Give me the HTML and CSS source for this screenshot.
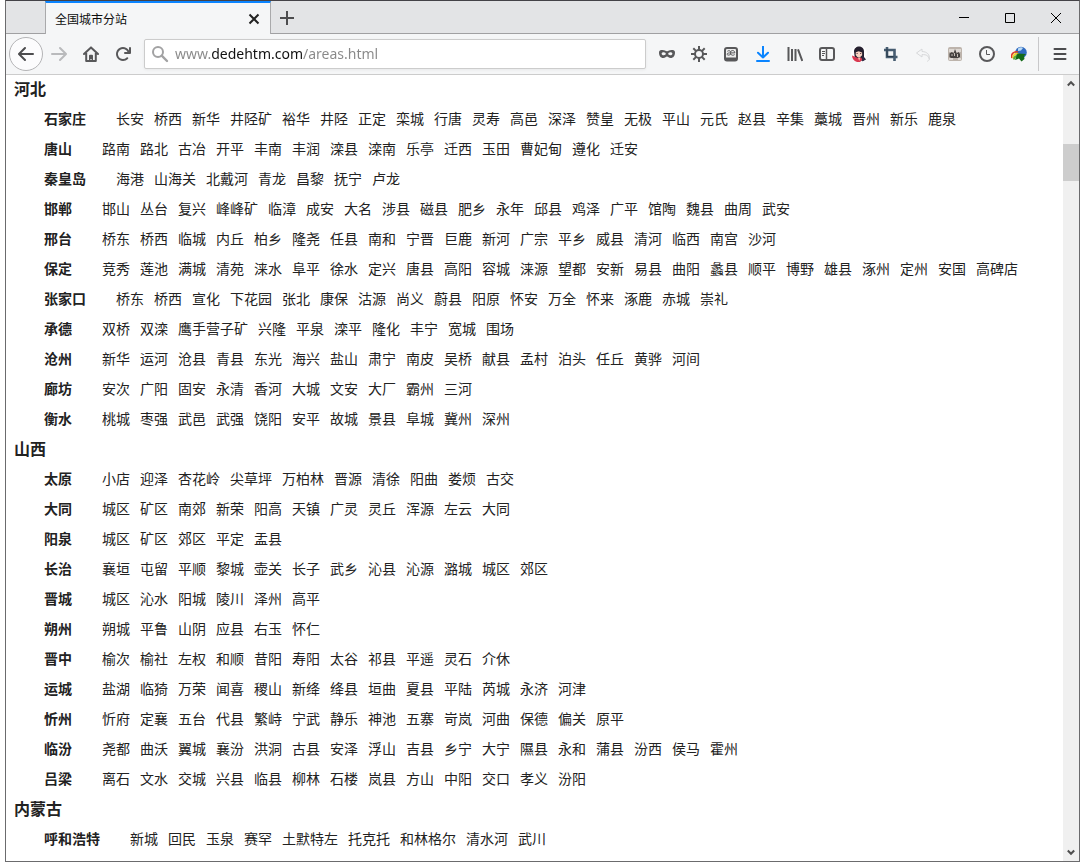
FILE: index.html
```html
<!DOCTYPE html>
<html lang="zh-CN">

<head>
  <meta charset="UTF-8">
  <meta name="viewport" content="width=device-width, initial-scale=1.0">
  <title>全国城市分站</title>
  <link rel="stylesheet" href="styles.css">
</head>

<body>
  <div class="window">
    <div class="tabbar">
      <div class="tab">
        <span class="tab-title">全国城市分站</span>
        <button class="tab-close" aria-label="关闭标签页">
          <svg width="12" height="12" viewBox="0 0 12 12"><path d="M1.5 1.5l9 9M10.5 1.5l-9 9" stroke="#222" stroke-width="2" /></svg>
        </button>
      </div>
      <button class="newtab" aria-label="新标签页">
        <svg width="14" height="14" viewBox="0 0 14 14"><path d="M7 0v14M0 7h14" stroke="#4c4c4e" stroke-width="2" /></svg>
      </button>
      <div class="controls">
        <button aria-label="最小化"><svg width="10" height="10" viewBox="0 0 10 10"><path d="M0 4.5h10" stroke="#000" /></svg></button>
        <button aria-label="最大化"><svg width="10" height="10" viewBox="0 0 10 10"><path d="M.5.5h9v9h-9z" fill="none" stroke="#000" /></svg></button>
        <button aria-label="关闭"><svg width="10" height="10" viewBox="0 0 10 10"><path d="M0 0l10 10M10 0L0 10" stroke="#000" /></svg></button>
      </div>
    </div>

    <div class="toolbar">
      <button class="back" aria-label="后退">
        <svg width="16" height="16" viewBox="0 0 16 16"><path d="M15 7H3.414l4.293-4.293a1 1 0 0 0-1.414-1.414l-6 6a1 1 0 0 0 0 1.414l6 6a1 1 0 0 0 1.414-1.414L3.414 9H15a1 1 0 0 0 0-2z" fill="#4c4c4e" /></svg>
      </button>
      <button class="tool" aria-label="前进">
        <svg width="16" height="16" viewBox="0 0 16 16"><path d="M1 7h11.586L8.293 2.707a1 1 0 0 1 1.414-1.414l6 6a1 1 0 0 1 0 1.414l-6 6a1 1 0 0 1-1.414-1.414L12.586 9H1a1 1 0 0 1 0-2z" fill="#b9babc" /></svg>
      </button>
      <button class="tool" aria-label="主页">
        <svg width="16" height="16" viewBox="0 0 16 16"><path d="M1 8l7-6.6L15 8M3.2 7v8h9.6V7" fill="none" stroke="#58585a" stroke-width="2" stroke-linecap="round" stroke-linejoin="round" /><path d="M6 15V9.8a1 1 0 0 1 1-1h2a1 1 0 0 1 1 1V15H8.600v-2H7.400v2z" fill="#58585a" /></svg>
      </button>
      <button class="tool" aria-label="刷新">
        <svg width="16" height="16" viewBox="0 0 16 16"><path d="M15 1a1 1 0 0 0-1 1v2.418A6.995 6.995 0 1 0 8 15a6.954 6.954 0 0 0 4.950-2.050 1 1 0 0 0-1.414-1.414A5.019 5.019 0 1 1 12.549 6H10a1 1 0 0 0 0 2h5a1 1 0 0 0 1-1V2a1 1 0 0 0-1-1z" fill="#58585a" /></svg>
      </button>

      <label class="urlbar">
        <svg width="18" height="18" viewBox="0 0 18 18"><circle cx="7" cy="7" r="5" fill="none" stroke="#a2a2a3" stroke-width="2" /><path d="M10.700 10.700L16 16" stroke="#a2a2a3" stroke-width="2.400" stroke-linecap="round" /></svg>
        <input class="url" type="text" value="www.dedehtm.com/areas.html" aria-label="网址" spellcheck="false">
      </label>

      <button class="tool" aria-label="隐私">
        <svg width="16" height="16" viewBox="0 0 16 16"><path fill-rule="evenodd" d="M3.500 4C1.300 4 0 4.600 0 6.500 0 9.800 1.700 12 4.300 12 6.300 12 6.900 10.400 8 10.400S9.700 12 11.700 12C14.300 12 16 9.800 16 6.500 16 4.600 14.700 4 12.500 4 10.300 4 9.500 5.200 8 5.200S5.700 4 3.500 4zM4.700 6.200c1.300 0 2.100.9 2.100 1.500S6 9.200 4.700 9.200 2.600 8.500 2.600 7.700s.8-1.500 2.100-1.500zM11.300 6.200c1.300 0 2.100.7 2.100 1.500s-.8 1.500-2.100 1.500-2.100-.9-2.100-1.500.8-1.500 2.100-1.500z" fill="#58585a" /></svg>
      </button>
      <button class="tool" aria-label="设置">
        <svg width="16" height="16" viewBox="0 0 16 16"><g fill="none" stroke="#58585a" stroke-width="2"><circle cx="8" cy="8" r="4" /><path d="M8 0v4M8 12v4M0 8h4M12 8h4M2.300 2.300l2.600 2.600M11.100 11.100l2.600 2.600M2.300 13.700l2.600-2.600M11.100 4.900l2.600-2.600" /></g></svg>
      </button>
      <button class="tool" aria-label="字典">
        <svg width="16" height="16" viewBox="0 0 16 16"><rect x="2" y="2" width="12" height="12.500" rx="2" fill="#eee" stroke="#58585a" stroke-width="2" /><path d="M2 11.500h12v3H2z" fill="#58585a" /><path d="M4.400 5.300c1-1 3.200-.9 3.200 1v2.200M7.600 6.900c-1.800 0-3.500.1-3.500 1.300s2.600 1.300 3.500-.2c.8 1.700 3 1.400 4 .6M7.600 6.900h4.200c.1-2.700-3.600-3.200-4.200-.9" fill="none" stroke="#58585a" /></svg>
      </button>
      <button class="tool" aria-label="下载">
        <svg width="16" height="16" viewBox="0 0 16 16"><path d="M8 .5v11M3 6.700l5 4.800 5-4.800M2 15h12" fill="none" stroke="#0a84ff" stroke-width="2" stroke-linecap="round" stroke-linejoin="round" /></svg>
      </button>
      <button class="tool" aria-label="我的足迹">
        <svg width="16" height="16" viewBox="0 0 16 16"><path d="M1.500 1v14M5 3v12M8.500 3v12M11 3.300L15.300 15" fill="none" stroke="#58585a" stroke-width="2" /></svg>
      </button>
      <button class="tool" aria-label="侧栏">
        <svg width="16" height="16" viewBox="0 0 16 16"><rect x="1" y="2" width="14" height="12" rx="2" fill="none" stroke="#58585a" stroke-width="2" /><path d="M7.500 2v12" stroke="#58585a" stroke-width="1.500" /><path d="M3 5.500h3M3 7.500h3M3 9.500h2" stroke="#58585a" /></svg>
      </button>
      <button class="tool" aria-label="用户">
        <svg width="16" height="16" viewBox="0 0 16 16"><circle cx="8" cy="8" r="8" fill="#fff" /><path d="M3 5.500C3 2.500 5.400.5 8 .5s5 1.800 5 5v5.500l2 2.500-3 1.500-8-2z" fill="#25202f" /><path d="M4.800 6.200l2.800-1 3.500 1.300v2.700L9 11.300H6.500L4.700 9z" fill="#f8d2c1" /><path d="M5.600 7.500h1M9.200 7.500h1" stroke="#472d38" /><path d="M1 9.500l2.500 1L6.700 12l3.300-.5 1.500 2L9 16H6C2.700 15 1.200 12.500 1 9.500z" fill="#d93850" /><path d="M7 11.500h2.300L8.200 15z" fill="#f7c7b8" /><path d="M11.300 9v6.500l2.700-2z" fill="#332c48" /></svg>
      </button>
      <button class="tool" aria-label="截图">
        <svg width="16" height="16" viewBox="0 0 16 16"><path d="M4 1v10h7M1 4h10.500v11M8 11h6.500" fill="none" stroke="#465c70" stroke-width="2.600" /><path d="M4 3v7.500h6.500" fill="none" stroke="#293b4b" /></svg>
      </button>
      <button class="tool" aria-label="撤销">
        <svg width="16" height="16" viewBox="0 0 16 16"><path d="M7 3L1.500 7 7 11V8.600c4.500-.1 6.500.9 7.300 4.800M7 3v2.500c5 .2 8 3 7.300 7.900-.5 1.200-1.300 1.700-2.300 1.900" fill="none" stroke="#d7d8da" stroke-linejoin="round" /></svg>
      </button>
      <button class="tool" aria-label="扩展">
        <svg width="16" height="16" viewBox="0 0 16 16"><rect x="1" y="1" width="14" height="14" rx="2" fill="#bdb4ac" /><path d="M2 3h12v3H2zM2 12h4v2H2zM11 12h3v2h-3z" fill="#ded8d2" /><path d="M2.500 11V7.500L5 6l1.500 1.500L8 3l1.700 4.500L11.500 6 13 8v3l-2 1H4z" fill="#46413e" /><path d="M5 8v2M7.500 7v3M10.500 8v3" stroke="#c5bdb5" /></svg>
      </button>
      <button class="tool" aria-label="历史">
        <svg width="16" height="16" viewBox="0 0 16 16"><circle cx="8" cy="8" r="7" fill="none" stroke="#58585a" stroke-width="2" /><path d="M7.500 4v4.500H11" fill="none" stroke="#58585a" /></svg>
      </button>
      <button class="tool" aria-label="下载管理">
        <svg width="16" height="16" viewBox="0 0 16 16"><circle cx="10" cy="6.500" r="5.800" fill="#316cc0" /><path d="M7 2.500c2-1.500 4-1.500 5-.5L10 4.500 7 5z" fill="#bddcf4" /><path d="M1 12C-.5 8 3 5 7 6" fill="none" stroke="#dd3b25" stroke-width="1.600" /><path d="M2.500 12.500C1.500 9 4.500 7 7.500 8" fill="none" stroke="#f3d22b" stroke-width="1.800" /><path d="M3 13.500c0-2.500 2-4 4.500-3.500" fill="none" stroke="#57ab35" stroke-width="2" /><path d="M6.500 7.500l8.500.5-2 2 .5 3-3 2.500-2.500-3-4 1.500z" fill="#146b18" /></svg>
      </button>
      <div class="sep"></div>
      <button class="tool" aria-label="菜单">
        <svg width="16" height="16" viewBox="0 0 16 16"><path d="M2.500 3h11M2.500 8h11M2.500 13h11" stroke="#4c4c4e" stroke-width="2" stroke-linecap="round" /></svg>
      </button>
    </div>

    <div class="viewport">
      <div class="areas">
        <h2>河北</h2>
        <div class="city"><strong>石家庄</strong> <a href="#">长安</a> <a href="#">桥西</a> <a href="#">新华</a> <a href="#">井陉矿</a> <a href="#">裕华</a> <a href="#">井陉</a> <a href="#">正定</a> <a href="#">栾城</a> <a href="#">行唐</a> <a href="#">灵寿</a> <a href="#">高邑</a> <a href="#">深泽</a> <a href="#">赞皇</a> <a href="#">无极</a> <a href="#">平山</a> <a href="#">元氏</a> <a href="#">赵县</a> <a href="#">辛集</a> <a href="#">藁城</a> <a href="#">晋州</a> <a href="#">新乐</a> <a href="#">鹿泉</a></div>
        <div class="city"><strong>唐山</strong> <a href="#">路南</a> <a href="#">路北</a> <a href="#">古冶</a> <a href="#">开平</a> <a href="#">丰南</a> <a href="#">丰润</a> <a href="#">滦县</a> <a href="#">滦南</a> <a href="#">乐亭</a> <a href="#">迁西</a> <a href="#">玉田</a> <a href="#">曹妃甸</a> <a href="#">遵化</a> <a href="#">迁安</a></div>
        <div class="city"><strong>秦皇岛</strong> <a href="#">海港</a> <a href="#">山海关</a> <a href="#">北戴河</a> <a href="#">青龙</a> <a href="#">昌黎</a> <a href="#">抚宁</a> <a href="#">卢龙</a></div>
        <div class="city"><strong>邯郸</strong> <a href="#">邯山</a> <a href="#">丛台</a> <a href="#">复兴</a> <a href="#">峰峰矿</a> <a href="#">临漳</a> <a href="#">成安</a> <a href="#">大名</a> <a href="#">涉县</a> <a href="#">磁县</a> <a href="#">肥乡</a> <a href="#">永年</a> <a href="#">邱县</a> <a href="#">鸡泽</a> <a href="#">广平</a> <a href="#">馆陶</a> <a href="#">魏县</a> <a href="#">曲周</a> <a href="#">武安</a></div>
        <div class="city"><strong>邢台</strong> <a href="#">桥东</a> <a href="#">桥西</a> <a href="#">临城</a> <a href="#">内丘</a> <a href="#">柏乡</a> <a href="#">隆尧</a> <a href="#">任县</a> <a href="#">南和</a> <a href="#">宁晋</a> <a href="#">巨鹿</a> <a href="#">新河</a> <a href="#">广宗</a> <a href="#">平乡</a> <a href="#">威县</a> <a href="#">清河</a> <a href="#">临西</a> <a href="#">南宫</a> <a href="#">沙河</a></div>
        <div class="city"><strong>保定</strong> <a href="#">竞秀</a> <a href="#">莲池</a> <a href="#">满城</a> <a href="#">清苑</a> <a href="#">涞水</a> <a href="#">阜平</a> <a href="#">徐水</a> <a href="#">定兴</a> <a href="#">唐县</a> <a href="#">高阳</a> <a href="#">容城</a> <a href="#">涞源</a> <a href="#">望都</a> <a href="#">安新</a> <a href="#">易县</a> <a href="#">曲阳</a> <a href="#">蠡县</a> <a href="#">顺平</a> <a href="#">博野</a> <a href="#">雄县</a> <a href="#">涿州</a> <a href="#">定州</a> <a href="#">安国</a> <a href="#">高碑店</a></div>
        <div class="city"><strong>张家口</strong> <a href="#">桥东</a> <a href="#">桥西</a> <a href="#">宣化</a> <a href="#">下花园</a> <a href="#">张北</a> <a href="#">康保</a> <a href="#">沽源</a> <a href="#">尚义</a> <a href="#">蔚县</a> <a href="#">阳原</a> <a href="#">怀安</a> <a href="#">万全</a> <a href="#">怀来</a> <a href="#">涿鹿</a> <a href="#">赤城</a> <a href="#">崇礼</a></div>
        <div class="city"><strong>承德</strong> <a href="#">双桥</a> <a href="#">双滦</a> <a href="#">鹰手营子矿</a> <a href="#">兴隆</a> <a href="#">平泉</a> <a href="#">滦平</a> <a href="#">隆化</a> <a href="#">丰宁</a> <a href="#">宽城</a> <a href="#">围场</a></div>
        <div class="city"><strong>沧州</strong> <a href="#">新华</a> <a href="#">运河</a> <a href="#">沧县</a> <a href="#">青县</a> <a href="#">东光</a> <a href="#">海兴</a> <a href="#">盐山</a> <a href="#">肃宁</a> <a href="#">南皮</a> <a href="#">吴桥</a> <a href="#">献县</a> <a href="#">孟村</a> <a href="#">泊头</a> <a href="#">任丘</a> <a href="#">黄骅</a> <a href="#">河间</a></div>
        <div class="city"><strong>廊坊</strong> <a href="#">安次</a> <a href="#">广阳</a> <a href="#">固安</a> <a href="#">永清</a> <a href="#">香河</a> <a href="#">大城</a> <a href="#">文安</a> <a href="#">大厂</a> <a href="#">霸州</a> <a href="#">三河</a></div>
        <div class="city"><strong>衡水</strong> <a href="#">桃城</a> <a href="#">枣强</a> <a href="#">武邑</a> <a href="#">武强</a> <a href="#">饶阳</a> <a href="#">安平</a> <a href="#">故城</a> <a href="#">景县</a> <a href="#">阜城</a> <a href="#">冀州</a> <a href="#">深州</a></div>

        <h2>山西</h2>
        <div class="city"><strong>太原</strong> <a href="#">小店</a> <a href="#">迎泽</a> <a href="#">杏花岭</a> <a href="#">尖草坪</a> <a href="#">万柏林</a> <a href="#">晋源</a> <a href="#">清徐</a> <a href="#">阳曲</a> <a href="#">娄烦</a> <a href="#">古交</a></div>
        <div class="city"><strong>大同</strong> <a href="#">城区</a> <a href="#">矿区</a> <a href="#">南郊</a> <a href="#">新荣</a> <a href="#">阳高</a> <a href="#">天镇</a> <a href="#">广灵</a> <a href="#">灵丘</a> <a href="#">浑源</a> <a href="#">左云</a> <a href="#">大同</a></div>
        <div class="city"><strong>阳泉</strong> <a href="#">城区</a> <a href="#">矿区</a> <a href="#">郊区</a> <a href="#">平定</a> <a href="#">盂县</a></div>
        <div class="city"><strong>长治</strong> <a href="#">襄垣</a> <a href="#">屯留</a> <a href="#">平顺</a> <a href="#">黎城</a> <a href="#">壶关</a> <a href="#">长子</a> <a href="#">武乡</a> <a href="#">沁县</a> <a href="#">沁源</a> <a href="#">潞城</a> <a href="#">城区</a> <a href="#">郊区</a></div>
        <div class="city"><strong>晋城</strong> <a href="#">城区</a> <a href="#">沁水</a> <a href="#">阳城</a> <a href="#">陵川</a> <a href="#">泽州</a> <a href="#">高平</a></div>
        <div class="city"><strong>朔州</strong> <a href="#">朔城</a> <a href="#">平鲁</a> <a href="#">山阴</a> <a href="#">应县</a> <a href="#">右玉</a> <a href="#">怀仁</a></div>
        <div class="city"><strong>晋中</strong> <a href="#">榆次</a> <a href="#">榆社</a> <a href="#">左权</a> <a href="#">和顺</a> <a href="#">昔阳</a> <a href="#">寿阳</a> <a href="#">太谷</a> <a href="#">祁县</a> <a href="#">平遥</a> <a href="#">灵石</a> <a href="#">介休</a></div>
        <div class="city"><strong>运城</strong> <a href="#">盐湖</a> <a href="#">临猗</a> <a href="#">万荣</a> <a href="#">闻喜</a> <a href="#">稷山</a> <a href="#">新绛</a> <a href="#">绛县</a> <a href="#">垣曲</a> <a href="#">夏县</a> <a href="#">平陆</a> <a href="#">芮城</a> <a href="#">永济</a> <a href="#">河津</a></div>
        <div class="city"><strong>忻州</strong> <a href="#">忻府</a> <a href="#">定襄</a> <a href="#">五台</a> <a href="#">代县</a> <a href="#">繁峙</a> <a href="#">宁武</a> <a href="#">静乐</a> <a href="#">神池</a> <a href="#">五寨</a> <a href="#">岢岚</a> <a href="#">河曲</a> <a href="#">保德</a> <a href="#">偏关</a> <a href="#">原平</a></div>
        <div class="city"><strong>临汾</strong> <a href="#">尧都</a> <a href="#">曲沃</a> <a href="#">翼城</a> <a href="#">襄汾</a> <a href="#">洪洞</a> <a href="#">古县</a> <a href="#">安泽</a> <a href="#">浮山</a> <a href="#">吉县</a> <a href="#">乡宁</a> <a href="#">大宁</a> <a href="#">隰县</a> <a href="#">永和</a> <a href="#">蒲县</a> <a href="#">汾西</a> <a href="#">侯马</a> <a href="#">霍州</a></div>
        <div class="city"><strong>吕梁</strong> <a href="#">离石</a> <a href="#">文水</a> <a href="#">交城</a> <a href="#">兴县</a> <a href="#">临县</a> <a href="#">柳林</a> <a href="#">石楼</a> <a href="#">岚县</a> <a href="#">方山</a> <a href="#">中阳</a> <a href="#">交口</a> <a href="#">孝义</a> <a href="#">汾阳</a></div>

        <h2>内蒙古</h2>
        <div class="city"><strong>呼和浩特</strong> <a href="#">新城</a> <a href="#">回民</a> <a href="#">玉泉</a> <a href="#">赛罕</a> <a href="#">土默特左</a> <a href="#">托克托</a> <a href="#">和林格尔</a> <a href="#">清水河</a> <a href="#">武川</a></div>
      </div>

      <div class="scrollbar">
        <button aria-label="向上滚动"><svg width="8" height="7" viewBox="0 0 8 7"><path d="M.8 5.500L4 2.200l3.200 3.300" fill="none" stroke="#505050" stroke-width="2" /></svg></button>
        <div class="track"><div class="thumb"></div></div>
        <button aria-label="向下滚动"><svg width="8" height="7" viewBox="0 0 8 7"><path d="M.8 1.500L4 4.800l3.200-3.300" fill="none" stroke="#505050" stroke-width="2" /></svg></button>
      </div>
    </div>
  </div>
</body>

</html>
```
FILE: styles.css
```css
* {
  box-sizing: border-box;
}

body {
  margin: 0;
  background-color: #fff;
  color: #222;
  font-family: "Noto Sans CJK SC", sans-serif;
  font-size: 14px;
}

button {
  display: flex;
  align-items: center;
  justify-content: center;
  flex: none;
  padding: 0;
  border: none;
  background: none;
}

.window {
  display: flex;
  flex-direction: column;
  height: calc(100vh - 5px);
  margin: 0 5px;
  border: 1px solid #6b6b6d;
  border-top-color: #444247;
}

/* tabs */
.tabbar {
  display: flex;
  flex: none;
  height: 33px;
  padding-left: 39px;
  background-color: #e3e4e6;
  box-shadow: inset 0 -1px #a0a0a2;
}

.tab {
  display: flex;
  align-items: center;
  justify-content: space-between;
  width: 226px;
  padding: 0 10px 0 9px;
  border: 1px solid #a9a9ab;
  border-top: 2px solid #0a84ff;
  border-bottom: none;
  background-color: #f5f6f7;
}

.tab-title {
  font-size: 12px;
  line-height: 18px;
  color: #0c0c0d;
}

.newtab {
  width: 32px;
}

.controls {
  display: flex;
  margin-left: auto;
}

.controls button {
  width: 46px;
}

/* toolbar */
.toolbar {
  display: flex;
  align-items: center;
  flex: none;
  height: 41px;
  padding: 0 3px;
  border-bottom: 1px solid #ccc;
  background-color: #f5f6f7;
}

.back {
  width: 34px;
  height: 34px;
  border: 1px solid #b4b4b6;
  border-radius: 50%;
  background-color: #fcfcfd;
}

.tool {
  width: 32px;
  height: 32px;
}

.urlbar {
  display: flex;
  align-items: center;
  flex: 1;
  height: 30px;
  margin: 0 5px;
  padding-left: 6px;
  border: 1px solid #ccc;
  border-radius: 2px;
  background-color: #fff;
  box-shadow: 0 1px 3px rgba(0, 0, 0, 0.06);
}

/* the domain is darker than the rest of the address */
.url {
  flex: 1;
  min-width: 0;
  margin-left: 6px;
  padding: 0;
  border: none;
  outline: none;
  font-family: "Noto Sans", sans-serif;
  font-size: 14px;
  line-height: 20px;
  color: #222;
  background: linear-gradient(to right, #888 36px, #111 36px, #111 127px, #888 127px);
  background-clip: text;
  -webkit-background-clip: text;
  -webkit-text-fill-color: transparent;
}

.sep {
  width: 1px;
  height: 34px;
  margin: 0 5px 0 3px;
  background-color: #c8c8ca;
}

/* page */
.viewport {
  display: flex;
  flex: 1;
  min-height: 0;
}

.areas {
  flex: 1;
  min-width: 0;
  padding: 0 8px;
  overflow: hidden;
}

h2 {
  margin: 0;
  font-size: 16px;
  line-height: 30px;
}

h2:first-child {
  margin-top: -2px;
}

.city {
  display: flex;
  flex-wrap: wrap;
  column-gap: 10px;
  padding-left: 30px;
  line-height: 30px;
}

.city strong {
  margin-right: 20px;
}

.city a {
  color: #222;
  text-decoration: none;
}

.city a:hover {
  text-decoration: underline;
}

.scrollbar {
  display: flex;
  flex-direction: column;
  flex: none;
  width: 16px;
  background-color: #f0f0f0;
}

.scrollbar button {
  height: 17px;
}

.track {
  flex: 1;
  padding-top: 52px;
}

.thumb {
  height: 37px;
  background-color: #cdcdcd;
}
```
